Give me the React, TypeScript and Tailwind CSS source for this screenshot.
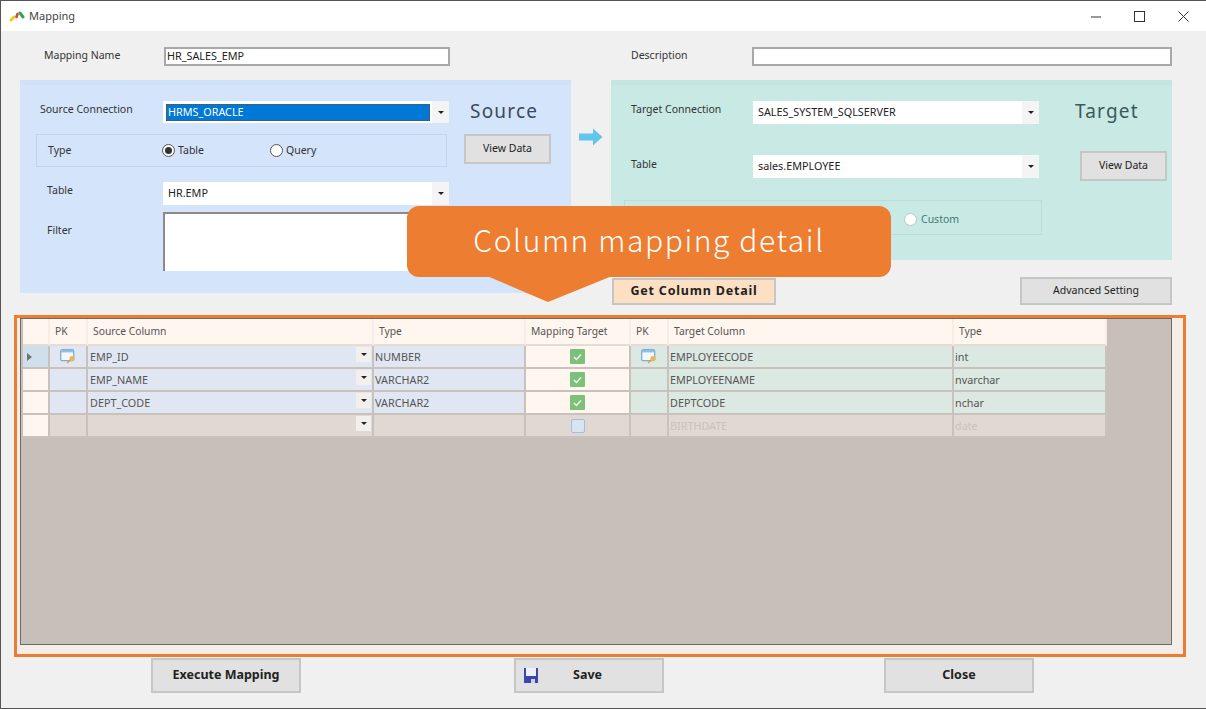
import React from "react";

const font = "font-['Noto_Sans','Noto_Sans_CJK_JP',sans-serif]";

const rows = [
  { src: "EMP_ID", type: "NUMBER", pk: true, checked: true, target: "EMPLOYEECODE", targetType: "int" },
  { src: "EMP_NAME", type: "VARCHAR2", pk: false, checked: true, target: "EMPLOYEENAME", targetType: "nvarchar" },
  { src: "DEPT_CODE", type: "VARCHAR2", pk: false, checked: true, target: "DEPTCODE", targetType: "nchar" },
  { src: "", type: "", pk: false, checked: false, target: "BIRTHDATE", targetType: "date" },
];

const Caret = () => <span className="w-0 h-0 border-x-[3px] border-x-transparent border-t-[3px] border-t-[#222]" />;

const Select = ({ value, selected }: { value: string; selected?: boolean }) => (
  <div className="w-[286px] h-full bg-white flex items-center text-[10.8px] text-[#222]">
    {selected ? (
      <div className="ml-[3px] flex-1 h-[17px] bg-[#0078d7] border border-dotted border-[#7a4a20] text-white flex items-center pl-[1px]">{value}</div>
    ) : (
      <div className="ml-[5px] flex-1">{value}</div>
    )}
    <div className="w-[17px] ml-[2px] h-full bg-[#f4f4f4] flex items-center justify-center"><Caret /></div>
  </div>
);

const WinButton = ({ label, className }: { label: string; className: string }) => (
  <div className={`border-2 border-[#c6c6c6] bg-[#e1e1e1] flex items-center justify-center text-[10.5px] text-[#222] ${className}`}>{label}</div>
);

const Radio = ({ on }: { on?: boolean }) => (
  <span className="w-[13px] h-[13px] rounded-full border border-[#555] bg-white flex items-center justify-center">
    {on && <span className="w-[7px] h-[7px] rounded-full bg-[#333]" />}
  </span>
);

const KeyIcon = () => (
  <svg width="16" height="15" viewBox="0 0 16 15">
    <rect x="0.7" y="0.7" width="13" height="11" rx="1.5" fill="#f4f8fc" stroke="#7aaed6" strokeWidth="1.3" />
    <rect x="1" y="1" width="12.4" height="2.4" fill="#8fbfe2" />
    <circle cx="12" cy="9.5" r="2.6" fill="#eeb552" />
    <path d="M10.5 11 L7 14" stroke="#e0a23e" strokeWidth="1.6" />
  </svg>
);

const Check = ({ on }: { on: boolean }) =>
  on ? (
    <span className="w-[15px] h-[15px] rounded-[1px] bg-[#7cc07a] flex items-center justify-center">
      <svg width="9" height="8" viewBox="0 0 9 8"><path d="M1 4 L3.5 6.5 L8 1.5" fill="none" stroke="#f2f8ee" strokeWidth="1.4" /></svg>
    </span>
  ) : (
    <span className="w-[14px] h-[14px] rounded-[2px] bg-[#d6e5f0] border border-[#a9bcd9]" />
  );

const Head = ({ children, className = "" }: { children?: React.ReactNode; className?: string }) => (
  <div className={`h-[27px] bg-[#fff6f0] border-r-2 border-b-2 border-r-[#f6ede6] border-b-[#e6dcd5] flex items-center text-[10.3px] text-[#555] ${className}`}>{children}</div>
);

const Cell = ({ children, className = "" }: { children?: React.ReactNode; className?: string }) => (
  <div className={`h-[23px] border-r-2 border-b-2 border-[#c9c2bc] flex items-center text-[10.8px] ${className}`}>{children}</div>
);

export default function App() {
  return (
    <div className={`relative w-[1206px] h-[709px] overflow-hidden bg-[#f0f0f0] border-l border-b border-t border-[#555] ${font}`}>
      <div className="h-[30px] bg-white flex items-center">
        <svg className="ml-[8px]" width="16" height="14" viewBox="0 0 16 14">
          <path d="M2 11 L5 8" stroke="#f6c915" strokeWidth="3" strokeLinecap="round" />
          <path d="M7.5 8 L8.5 5" stroke="#e0413a" strokeWidth="2.6" strokeLinecap="round" />
          <path d="M11 4 L14 8" stroke="#2fa84f" strokeWidth="3" strokeLinecap="round" />
        </svg>
        <span className="ml-[4px] text-[11px] text-[#444]">Mapping</span>
        <div className="ml-auto flex items-center pr-[17px]">
          <svg width="11" height="11" viewBox="0 0 11 11"><path d="M0 6 H10" stroke="#333" strokeWidth="1" /></svg>
          <svg className="ml-[32px]" width="11" height="11" viewBox="0 0 11 11"><rect x="0.5" y="0.5" width="10" height="10" fill="none" stroke="#333" /></svg>
          <svg className="ml-[33px]" width="11" height="11" viewBox="0 0 11 11"><path d="M0.5 0.5 L10.5 10.5 M10.5 0.5 L0.5 10.5" stroke="#333" /></svg>
        </div>
      </div>

      <div className="mt-[16px] h-[19px] flex items-center text-[10.5px] text-[#333]">
        <span className="ml-[43px] w-[120px] pb-[2px]">Mapping Name</span>
        <div className="w-[286px] h-full bg-white border-2 border-[#a8a8a8] flex items-center pl-[1px] text-[10.8px] text-[#222]">HR_SALES_EMP</div>
        <span className="ml-[181px] w-[121px] pb-[2px]">Description</span>
        <div className="w-[420px] h-full bg-white border-2 border-[#a8a8a8]" />
      </div>

      <div className="mt-[14px] ml-[19px] flex items-start text-[10.5px] text-[#333]">
        <div className="w-[551px] h-[213px] bg-[#d4e5fb] border-t-[5px] border-[#cfe2f8] flex">
          <div className="w-[429px] pt-[16px]">
            <div className="h-[22px] flex items-center">
              <span className="pl-[20px] w-[143px] pb-[4px]">Source Connection</span>
              <Select value="HRMS_ORACLE" selected />
            </div>
            <div className="mt-[11px] ml-[16px] w-[411px] h-[33px] border border-[#c3d4ea] flex items-center">
              <span className="pl-[11px] w-[125px]">Type</span>
              <Radio on />
              <span className="ml-[3px] w-[92px]">Table</span>
              <Radio />
              <span className="ml-[3px]">Query</span>
            </div>
            <div className="mt-[15px] h-[23px] flex items-center">
              <span className="pl-[27px] w-[143px] pb-[5px]">Table</span>
              <Select value="HR.EMP" />
            </div>
            <div className="mt-[7px] flex items-start">
              <span className="pl-[27px] w-[143px] pt-[11px]">Filter</span>
              <div className="w-[286px] h-[59px] bg-white border-t-2 border-l-2 border-[#8a8a8a]" />
            </div>
          </div>
          <div className="ml-[15px] pt-[9px]">
            <div className="h-[34px] pl-[6px] flex items-center text-[19px] tracking-[1.2px] text-[#3c4a5a]">Source</div>
            <WinButton label="View Data" className="mt-[6px] w-[87px] h-[30px]" />
          </div>
        </div>

        <div className="w-[40px] pt-[48px] flex justify-center">
          <svg width="24" height="18" viewBox="0 0 24 18">
            <path d="M0 5.5 H14 V0.5 L23.5 9 L14 17.5 V12.5 H0 Z" fill="#62c6ec" />
          </svg>
        </div>

        <div>
          <div className="w-[561px] h-[180px] bg-[#c9e9e4] border-t-[5px] border-[#c5e5e0] flex">
            <div className="w-[428px] pt-[16px]">
              <div className="h-[23px] flex items-center">
                <span className="pl-[20px] w-[142px] pb-[5px]">Target Connection</span>
                <Select value="SALES_SYSTEM_SQLSERVER" />
              </div>
              <div className="mt-[31px] h-[23px] flex items-center">
                <span className="pl-[20px] w-[142px] pb-[4px]">Table</span>
                <Select value="sales.EMPLOYEE" />
              </div>
              <div className="mt-[22px] ml-[13px] w-[418px] h-[35px] border border-[#bcdcd7] flex items-center pl-[279px] pt-[4px] text-[#3d7a77]">
                <span className="w-[13px] h-[13px] rounded-full bg-white border border-[#b5c9c6]" />
                <span className="ml-[4px]">Custom</span>
              </div>
            </div>
            <div className="ml-[36px] pt-[9px]">
              <div className="h-[34px] flex items-center text-[19px] tracking-[1.2px] text-[#3c5a5a]">Target</div>
              <WinButton label="View Data" className="mt-[23px] ml-[5px] w-[87px] h-[30px]" />
            </div>
          </div>
          <div className="flex items-start">
            <div className="mt-[18px] ml-[1px] w-[164px] h-[27px] bg-[#fde0c4] border-2 border-[#c6c6c6] flex items-center justify-center text-[12.5px] font-bold tracking-[0.8px] text-[#222]">Get Column Detail</div>
            <WinButton label="Advanced Setting" className="mt-[17px] ml-[244px] w-[152px] h-[28px]" />
          </div>
        </div>
      </div>

      <div className="mt-[10px] ml-[13px] w-[1172px] h-[342px] border-[3px] border-[#ed7d31] bg-[#f5eee8] pl-[3px] pr-[11px] pb-[9px]">
        <div className="w-full h-full bg-[#c7bfb9] border border-[#6f6964] pl-[2px]">
          <div className="grid grid-cols-[27px_38px_286px_152px_105px_38px_285px_153px] w-[1084px]">
            <Head />
            <Head className="pl-[5px] bg-[#cfe0ec]">PK</Head>
            <Head className="pl-[5px]">Source Column</Head>
            <Head className="pl-[5px]">Type</Head>
            <Head className="pl-[5px]">Mapping Target</Head>
            <Head className="pl-[5px]">PK</Head>
            <Head className="pl-[5px]">Target Column</Head>
            <Head className="pl-[5px]">Type</Head>
            {rows.map((r, i) => {
              const last = i === rows.length - 1;
              return (
                <React.Fragment key={i}>
                  <Cell className={`justify-center ${i === 0 ? "bg-[#cfe0ec]" : "bg-[#fff6f0]"}`}>
                    {i === 0 && <span className="mr-[13px] w-0 h-0 border-y-[4px] border-y-transparent border-l-[5px] border-l-[#77706b]" />}
                  </Cell>
                  <Cell className={`justify-center ${last ? "bg-[#e0d8d3]" : "bg-[#e1e7f2]"}`}>{r.pk && <KeyIcon />}</Cell>
                  <Cell className={`pl-[2px] text-[#555] ${last ? "bg-[#e0d8d3]" : "bg-[#e1e7f2]"}`}>
                    <span className="pt-[1px]">{r.src}</span>
                    <span className="ml-auto mr-[1px] mb-[5px] w-[15px] h-[15px] bg-[#f3efec] flex items-center justify-center"><Caret /></span>
                  </Cell>
                  <Cell className={`pl-[1px] pt-[1px] text-[#555] ${last ? "bg-[#e0d8d3]" : "bg-[#e1e7f2]"}`}>{r.type}</Cell>
                  <Cell className={`justify-center ${last ? "bg-[#e0d8d3]" : "bg-[#fff6f0]"}`}><Check on={r.checked} /></Cell>
                  <Cell className={`justify-center ${last ? "bg-[#e0d8d3]" : "bg-[#dce8e2]"}`}>{r.pk && <KeyIcon />}</Cell>
                  <Cell className={`pl-[1px] pt-[1px] ${last ? "bg-[#e0d8d3] text-[#c9c2bd]" : "bg-[#dce8e2] text-[#555]"}`}>{r.target}</Cell>
                  <Cell className={`pl-[1px] pt-[1px] ${last ? "bg-[#e0d8d3] text-[#c9c2bd]" : "bg-[#dce8e2] text-[#555]"}`}>{r.targetType}</Cell>
                </React.Fragment>
              );
            })}
          </div>
        </div>
      </div>

      <div className="mt-[1px] flex text-[12.5px] font-bold text-[#222]">
        <div className="ml-[150px] w-[150px] h-[35px] bg-[#e1e1e1] border-2 border-[#c6c6c6] flex items-center justify-center">Execute Mapping</div>
        <div className="ml-[213px] w-[150px] h-[35px] bg-[#e1e1e1] border-2 border-[#c6c6c6] flex items-center">
          <svg className="ml-[8px]" width="14" height="15" viewBox="0 0 14 15">
            <rect width="14" height="15" fill="#3c45a8" />
            <rect x="2" y="0" width="10" height="8" fill="#eef0ff" />
            <rect x="7" y="11" width="4" height="4" fill="#c9cdee" />
          </svg>
          <span className="ml-[35px]">Save</span>
        </div>
        <div className="ml-[220px] w-[150px] h-[35px] bg-[#e1e1e1] border-2 border-[#c6c6c6] flex items-center justify-center">Close</div>
      </div>

      {/* callout sits over the panels */}
      <div className="absolute left-[406px] top-[205px] w-[484px] h-[71px] rounded-[12px] bg-[#ed7d31] flex items-center justify-center pb-[4px] text-white text-[30px] font-light tracking-[1.6px] font-['Noto_Sans_CJK_JP',sans-serif]">
        Column mapping detail
        <svg className="absolute left-[80px] top-[70px]" width="125" height="27" viewBox="0 0 125 27">
          <path d="M0 0 H125 L61 26 Z" fill="#ed7d31" />
        </svg>
      </div>
    </div>
  );
}
